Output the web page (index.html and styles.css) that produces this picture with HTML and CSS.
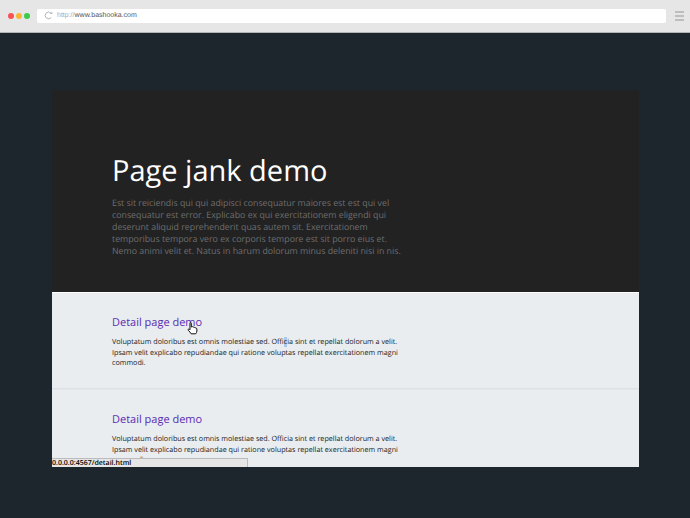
FILE: index.html
```html
<!DOCTYPE html>
<html lang="en">
<head>
    <meta charset="utf-8">
    <link rel="stylesheet" href="styles.css">
    <title>Page jank demo</title>
</head>
<body>
    <!--BROWSER BAR-->
    <div class="browser-bar">
        <div class="dots">
            <span class="dot dot-red"></span>
            <span class="dot dot-yellow"></span>
            <span class="dot dot-green"></span>
        </div>
        <div class="address">
            <svg class="reload" width="9" height="9" viewBox="0 0 10 10">
                <path d="M7.9 7.3A3.7 3.7 0 1 1 7.6 2.2" fill="none" stroke="#aaa" stroke-width="1"/>
                <path d="M6.6 3.4L9.2 3.4L9.2 0.9Z" fill="#aaa"/>
            </svg>
            <span class="url"><span class="url-scheme">http://</span>www.bashooka.com</span>
        </div>
        <div class="menu">
            <span></span>
            <span></span>
            <span></span>
        </div>
    </div>

    <!--PAGE IN THE WINDOW-->
    <div class="stage">
        <div class="demo">
            <div class="hero">
                <h1>Page jank demo</h1>
                <p>Est sit reiciendis qui qui adipisci consequatur maiores est est qui vel<br>consequatur est error. Explicabo ex qui exercitationem eligendi qui<br>deserunt aliquid reprehenderit quas autem sit. Exercitationem<br>temporibus tempora vero ex corporis tempore est sit porro eius et.<br>Nemo animi velit et. Natus in harum dolorum minus deleniti nisi in nis.</p>
            </div>
            <div class="item">
                <h2>Detail page demo</h2>
                <p>Voluptatum doloribus est omnis molestiae sed. Offi<span class="selected">c</span>ia sint et repellat dolorum a velit.<br>Ipsam velit explicabo repudiandae qui ratione voluptas repellat exercitationem magni<br>commodi.</p>
            </div>
            <div class="item">
                <h2>Detail page demo</h2>
                <p>Voluptatum doloribus est omnis molestiae sed. Officia sint et repellat dolorum a velit.<br>Ipsam velit explicabo repudiandae qui ratione voluptas repellat exercitationem magni<br>commodi.</p>
            </div>
            <div class="status">0.0.0.0:4567/detail.html</div>
            <svg class="cursor" width="11" height="13" viewBox="0 0 11 13">
                <path d="M3 1.2C3 .4 4.3.4 4.3 1.2V5L5 4.7C5.5 4.5 6 4.7 6.1 5.1C6.6 4.8 7.2 5 7.3 5.5C7.9 5.2 8.6 5.5 8.7 6.1C9.3 6 9.9 6.3 9.9 7V9C9.9 10.2 9.2 11 8.7 11.8H4.1C3.6 10.6 2.4 9.5 1.3 8.3C.6 7.5 1.6 6.6 2.3 7.2L3 7.8Z" fill="#fff" stroke="#111" stroke-width="1"/>
            </svg>
        </div>
    </div>
</body>
</html>
```

FILE: styles.css
```css
html, body {
    margin: 0;
    height: 100%;
}
body {
    width: 690px;
    height: 518px;
    overflow: hidden;
    display: flex;
    flex-direction: column;
    font-family: "Open Sans", "Noto Sans", sans-serif;
    text-rendering: geometricPrecision;
    background-color: #1d252d;
}
.browser-bar {
    height: 33px;
    flex-shrink: 0;
    box-sizing: border-box;
    display: flex;
    align-items: center;
    padding: 0 6px 1px 8px;
    background-color: #e6e6e6;
    border-bottom: 1px solid #b4b4b4;
}
.dots {
    display: flex;
    gap: 2px;
    margin-right: 7px;
}
.dot {
    width: 6px;
    height: 6px;
    border-radius: 50%;
}
.dot-red {
    background-color: #f9524f;
}
.dot-yellow {
    background-color: #f8b834;
}
.dot-green {
    background-color: #3ccb4b;
}
.address {
    width: 629px;
    height: 14px;
    display: flex;
    align-items: center;
    border-radius: 2px;
    background-color: #fff;
}
.reload {
    margin-left: 7px;
    margin-right: 4px;
}
.url {
    font-family: "Liberation Sans", sans-serif;
    font-size: 7px;
    color: #555;
}
.url-scheme {
    color: #aaa;
}
.menu {
    display: flex;
    flex-direction: column;
    gap: 2px;
    margin-left: 9px;
}
.menu span {
    display: block;
    width: 9px;
    height: 2px;
    background-color: #bdbdbd;
}
.stage {
    flex: 1;
    padding: 57px 51px 0 52px;
}
.demo {
    position: relative;
    height: 377px;
    overflow: hidden;
    background-color: #e9edf0;
}
.hero {
    height: 202px;
    box-sizing: border-box;
    padding: 61px 60px 0 60px;
    background-color: #222;
}
.hero h1 {
    margin: 0 0 6px 0;
    font-size: 29px;
    line-height: 40px;
    font-weight: 400;
    color: #fff;
}
.hero p {
    margin: 0;
    font-size: 8.8px;
    line-height: 12px;
    color: #6e6e6e;
    white-space: nowrap;
}
.item {
    height: 97px;
    box-sizing: border-box;
    padding-top: 22px;
    padding-left: 60px;
    border-top: 1px solid #fff;
    border-bottom: 1px solid #dde1e5;
}
.item + .item {
    border-top-color: #e3e7ea;
}
.item h2 {
    margin: 0 0 6px 0;
    font-size: 11px;
    line-height: 16px;
    font-weight: 400;
    color: #5b2cb3;
}
.item p {
    margin: 0;
    font-size: 7.2px;
    line-height: 10.5px;
    color: #222;
    white-space: nowrap;
}
.selected {
    background-color: #a9c9ef;
}
.status {
    position: absolute;
    left: 0;
    bottom: 0;
    width: 196px;
    height: 9px;
    box-sizing: border-box;
    border: 1px solid #bbb;
    border-bottom: none;
    border-left: none;
    background-color: #e6e6e6;
    font-size: 7px;
    font-weight: 600;
    line-height: 9px;
    color: #000;
}
.cursor {
    position: absolute;
    left: 135px;
    top: 232px;
}
```
